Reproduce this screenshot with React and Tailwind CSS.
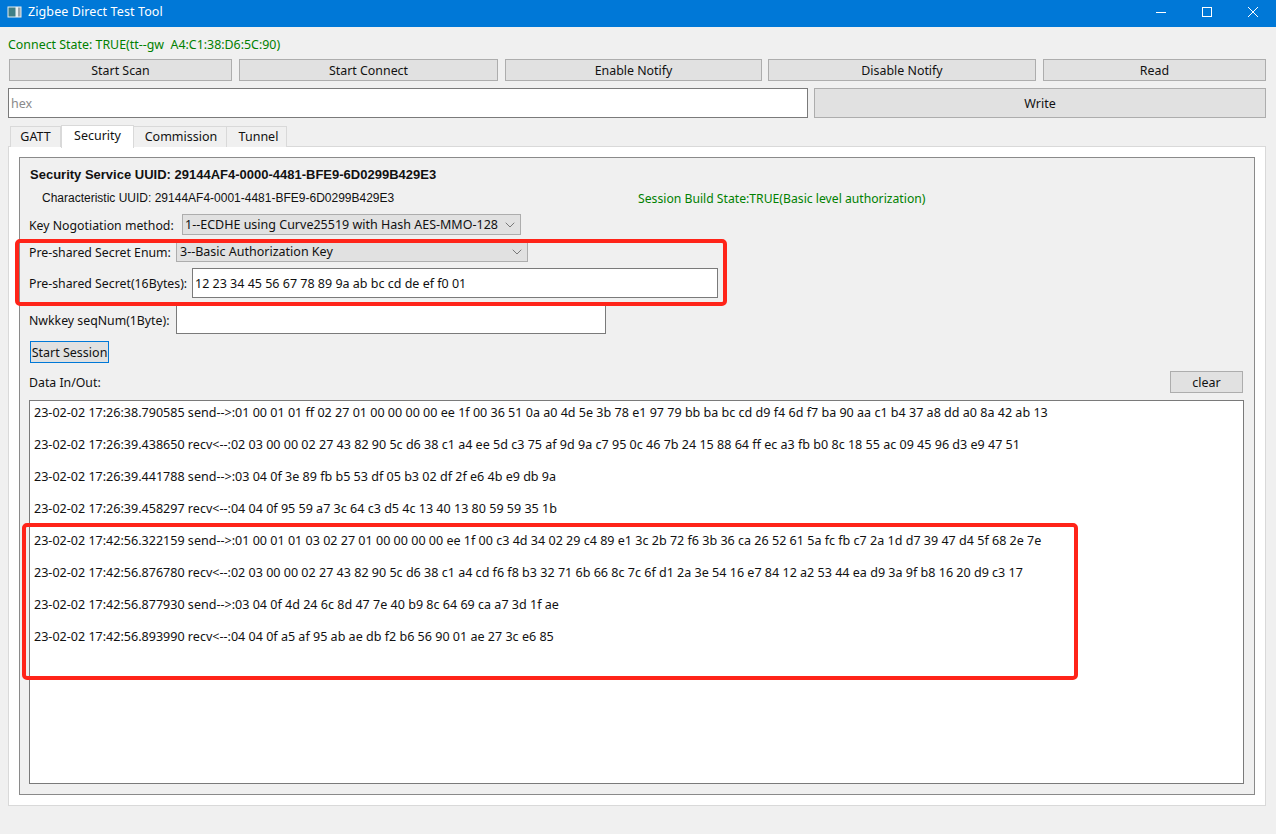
import { ChevronDown } from 'lucide-react';

const UI_FONT = "font-['Noto_Sans',sans-serif]";

const LOG_LINES = [
  '23-02-02 17:26:38.790585 send-->:01 00 01 01 ff 02 27 01 00 00 00 00 ee 1f 00 36 51 0a a0 4d 5e 3b 78 e1 97 79 bb ba bc cd d9 f4 6d f7 ba 90 aa c1 b4 37 a8 dd a0 8a 42 ab 13',
  '23-02-02 17:26:39.438650 recv<--:02 03 00 00 02 27 43 82 90 5c d6 38 c1 a4 ee 5d c3 75 af 9d 9a c7 95 0c 46 7b 24 15 88 64 ff ec a3 fb b0 8c 18 55 ac 09 45 96 d3 e9 47 51',
  '23-02-02 17:26:39.441788 send-->:03 04 0f 3e 89 fb b5 53 df 05 b3 02 df 2f e6 4b e9 db 9a',
  '23-02-02 17:26:39.458297 recv<--:04 04 0f 95 59 a7 3c 64 c3 d5 4c 13 40 13 80 59 59 35 1b',
  '23-02-02 17:42:56.322159 send-->:01 00 01 01 03 02 27 01 00 00 00 00 ee 1f 00 c3 4d 34 02 29 c4 89 e1 3c 2b 72 f6 3b 36 ca 26 52 61 5a fc fb c7 2a 1d d7 39 47 d4 5f 68 2e 7e',
  '23-02-02 17:42:56.876780 recv<--:02 03 00 00 02 27 43 82 90 5c d6 38 c1 a4 cd f6 f8 b3 32 71 6b 66 8c 7c 6f d1 2a 3e 54 16 e7 84 12 a2 53 44 ea d9 3a 9f b8 16 20 d9 c3 17',
  '23-02-02 17:42:56.877930 send-->:03 04 0f 4d 24 6c 8d 47 7e 40 b9 8c 64 69 ca a7 3d 1f ae',
  '23-02-02 17:42:56.893990 recv<--:04 04 0f a5 af 95 ab ae db f2 b6 56 90 01 ae 27 3c e6 85',
];

function TopButton({ label, className }) {
  return (
    <button className={`h-[22px] pt-[2px] bg-[#e1e1e1] border border-[#adadad] text-[12.4px] text-[#111] ${className}`}>
      {label}
    </button>
  );
}

function Combo({ label, className }) {
  return (
    <div className={`h-[21px] bg-[#e1e1e1] border border-[#adadad] flex items-center justify-between pr-[2px] text-[12.5px] text-[#111] ${className}`}>
      <span className="pt-[2px]">{label}</span>
      <ChevronDown size={16} strokeWidth={1} className="text-[#444]" />
    </div>
  );
}

export default function App() {
  return (
    <div className={`relative w-[1276px] h-[834px] overflow-hidden bg-[#f0f0f0] ${UI_FONT}`}>
      <div className="h-[27px] pb-[4px] bg-[#0078d7] flex items-center text-white">
        <svg width="16" height="14" viewBox="0 0 16 14" className="ml-[7px] mr-[5px]">
          <rect x="0.5" y="1.5" width="14" height="11" fill="#e8eef0" />
          <rect x="1.5" y="2.5" width="7" height="9" fill="#3f7f86" />
          <rect x="11" y="2.5" width="2.5" height="9" fill="#9aa5aa" />
        </svg>
        <span className="pt-[2px] text-[12.5px] tracking-[0.1px]">Zigbee Direct Test Tool</span>
        <div className="ml-auto flex items-center">
          <div className="w-[46px] flex justify-center">
            <svg width="10" height="10" viewBox="0 0 10 10" stroke="white" fill="none"><path d="M0 5.5H10" /></svg>
          </div>
          <div className="w-[46px] flex justify-center">
            <svg width="10" height="10" viewBox="0 0 10 10" stroke="white" fill="none"><rect x="0.5" y="0.5" width="9" height="9" /></svg>
          </div>
          <div className="w-[46px] flex justify-center">
            <svg width="10" height="10" viewBox="0 0 10 10" stroke="white" fill="none"><path d="M0 0L10 10M10 0L0 10" /></svg>
          </div>
        </div>
      </div>

      <div className="px-[8px] h-[32px] pt-[9px] text-[12.4px] leading-[17px] text-[#008000]">
        Connect State: TRUE(tt--gw&nbsp; A4:C1:38:D6:5C:90)
      </div>

      <div className="flex pl-[9px] pr-[10px] gap-[7px]">
        <TopButton label="Start Scan" className="w-[223px]" />
        <TopButton label="Start Connect" className="w-[259px]" />
        <TopButton label="Enable Notify" className="w-[257px]" />
        <TopButton label="Disable Notify" className="w-[268px] -ml-[1px]" />
        <TopButton label="Read" className="w-[223px]" />
      </div>

      <div className="flex pl-[8px] pr-[10px] gap-[6px] mt-[7px]">
        <div className="w-[800px] h-[30px] pt-[2px] bg-white border border-[#7a7a7a] flex items-center pl-[2px] text-[12.5px] text-[#8a8a8a]">hex</div>
        <button className="flex-1 h-[30px] pt-[2px] bg-[#e1e1e1] border border-[#adadad] text-[12.5px] text-[#111]">Write</button>
      </div>

      <div className="flex pl-[10px] mt-[7px] h-[22px] items-end relative z-10 text-[12.5px] text-[#111]">
        <div className="w-[51px] h-[21px] bg-[#f0f0f0] border border-b-0 border-[#d9d9d9] flex items-center justify-center">GATT</div>
        <div className="w-[73px] h-[23px] -mb-[1px] pb-[2px] bg-white border border-b-0 border-[#d9d9d9] flex items-center justify-center">Security</div>
        <div className="w-[93px] h-[21px] bg-[#f0f0f0] border border-b-0 border-l-0 border-[#d9d9d9] flex items-center justify-center pl-[2px]">Commission</div>
        <div className="w-[60px] h-[21px] bg-[#f0f0f0] border border-b-0 border-l-0 border-[#d9d9d9] flex items-center justify-center pl-[4px]">Tunnel</div>
      </div>

      <div className="ml-[8px] w-[1258px] h-[660px] -mt-[1px] bg-white border border-[#d9d9d9] pt-[10px] pl-[10px]">
        <div className="w-[1236px] h-[638px] bg-[#f0f0f0] border border-[#8a8a8a] pl-[9px] text-[12.3px] text-[#111]">
          <div className="h-[32px] ml-[1px] flex items-center pt-[1px] font-['Liberation_Sans',sans-serif] font-bold text-[13px]">
            Security Service UUID: 29144AF4-0000-4481-BFE9-6D0299B429E3
          </div>
          <div className="h-[16px] flex items-center">
            <span className="ml-[13px] w-[596px] text-[12px] font-['Liberation_Sans',sans-serif]">Characteristic UUID: 29144AF4-0001-4481-BFE9-6D0299B429E3</span>
            <span className="pt-[3px] text-[12.2px] text-[#008000]">Session Build State:TRUE(Basic level authorization)</span>
          </div>

          <div className="flex items-center h-[21px] mt-[8px]">
            <span className="w-[153px] pt-[3px]">Key Nogotiation method:</span>
            <Combo label="1--ECDHE using Curve25519 with Hash AES-MMO-128" className="w-[339px] pl-[2px]" />
          </div>
          <div className="flex items-center h-[21px] mt-[6px]">
            <span className="w-[147px] pt-[3px]">Pre-shared Secret Enum:</span>
            <Combo label="3--Basic Authorization Key" className="w-[352px] pl-[3px]" />
          </div>
          <div className="flex items-center h-[30px] mt-[6px]">
            <span className="w-[163px] pt-[2px]">Pre-shared Secret(16Bytes):</span>
            <div className="w-[526px] h-[30px] pt-[2px] bg-white border border-[#7a7a7a] flex items-center pl-[2px] text-[12.5px]">
              12 23 34 45 56 67 78 89 9a ab bc cd de ef f0 01
            </div>
          </div>
          <div className="flex items-center h-[30px] mt-[6px]">
            <span className="w-[147px] pt-[4px]">Nwkkey seqNum(1Byte):</span>
            <div className="w-[430px] h-[30px] bg-white border border-[#7a7a7a]" />
          </div>
          <button className="block w-[79px] h-[22px] ml-[1px] mt-[7px] pt-[2px] bg-[#e1e1e1] border border-[#0078d7] text-[12.5px]">Start Session</button>

          <div className="flex items-center justify-between h-[22px] mt-[8px] w-[1214px]">
            <span className="pt-[2px]">Data In/Out:</span>
            <button className="w-[73px] h-[22px] pt-[2px] bg-[#e1e1e1] border border-[#adadad] text-[12.5px]">clear</button>
          </div>

          <div className="w-[1215px] h-[384px] mt-[7px] bg-white border border-[#7a7a7a] pl-[4px] pt-[3px]">
            {LOG_LINES.map((line) => (
              <div key={line} className="h-[32px] leading-[17px] text-[12.55px] whitespace-nowrap">{line}</div>
            ))}
          </div>
        </div>
      </div>

      <div className="absolute left-[15px] top-[239px] w-[712px] h-[67px] border-4 border-[#ff2419] rounded-[5px]" />
      <div className="absolute left-[22px] top-[523px] w-[1056px] h-[157px] border-4 border-[#ff2419] rounded-[5px]" />
    </div>
  );
}
